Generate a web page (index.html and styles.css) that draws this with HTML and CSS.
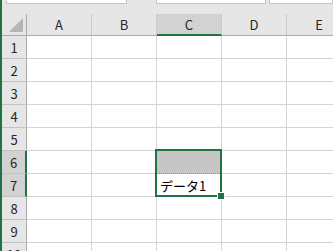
FILE: index.html
```html
<!DOCTYPE html>
<html lang="ja">
<head>
    <meta charset="UTF-8">
    <title>Sheet1</title>
    <link rel="stylesheet" href="styles.css">
</head>
<body>
    <div class="window">
        <div class="formula-strip">
            <div class="name-box"></div>
            <div class="formula-box"></div>
            <div class="formula-box extra"></div>
        </div>

        <div class="sheet">
            <div class="corner"><span class="tri"></span></div>
            <div class="col-head">A</div>
            <div class="col-head">B</div>
            <div class="col-head selected">C</div>
            <div class="col-head">D</div>
            <div class="col-head">E</div>

            <div class="row-head">1</div><div class="cell"></div><div class="cell"></div><div class="cell"></div><div class="cell"></div><div class="cell"></div>
            <div class="row-head">2</div><div class="cell"></div><div class="cell"></div><div class="cell"></div><div class="cell"></div><div class="cell"></div>
            <div class="row-head">3</div><div class="cell"></div><div class="cell"></div><div class="cell"></div><div class="cell"></div><div class="cell"></div>
            <div class="row-head">4</div><div class="cell"></div><div class="cell"></div><div class="cell"></div><div class="cell"></div><div class="cell"></div>
            <div class="row-head">5</div><div class="cell"></div><div class="cell"></div><div class="cell"></div><div class="cell"></div><div class="cell"></div>
            <div class="row-head selected">6</div><div class="cell"></div><div class="cell"></div>
            <div class="cell filled">
                <!-- 選択範囲 C6:C7 -->
                <div class="selection"><span class="fill-handle"></span></div>
            </div>
            <div class="cell"></div><div class="cell"></div>
            <div class="row-head selected">7</div><div class="cell"></div><div class="cell"></div><div class="cell data">データ1</div><div class="cell"></div><div class="cell"></div>
            <div class="row-head">8</div><div class="cell"></div><div class="cell"></div><div class="cell"></div><div class="cell"></div><div class="cell"></div>
            <div class="row-head">9</div><div class="cell"></div><div class="cell"></div><div class="cell"></div><div class="cell"></div><div class="cell"></div>
            <div class="row-head">10</div><div class="cell"></div><div class="cell"></div><div class="cell"></div><div class="cell"></div><div class="cell"></div>
        </div>
    </div>
</body>
</html>
```

FILE: styles.css
```css
body {
    margin: 0;
    background-color: #e6e6e6;
    font-family: 'Noto Sans CJK JP', 'Noto Sans', sans-serif;
    overflow: hidden;
}

.window {
    height: 251px;
    border-left: 2px solid #217346;
    background-color: #e6e6e6;
    overflow: hidden;
}

.formula-strip {
    display: flex;
    align-items: flex-start;
    height: 14px;
}

.name-box, .formula-box {
    height: 3px;
    background-color: #ffffff;
    border: 1px solid #c6c6c6;
    border-top: none;
}

.name-box {
    margin-left: 4px;
    width: 119px;
}

.formula-box {
    margin-left: 29px;
    width: 108px;
}

.formula-box.extra {
    margin-left: 3px;
    flex: 1;
}

.sheet {
    display: grid;
    grid-template-columns: 25px repeat(5, 65px);
    grid-template-rows: 22px repeat(10, 23px);
}

.corner, .col-head, .row-head, .cell {
    box-sizing: border-box;
}

.corner {
    display: flex;
    justify-content: flex-end;
    align-items: flex-end;
    padding: 0 3px 3px 0;
    border-right: 1px solid #ababab;
    border-bottom: 1px solid #ababab;
}

.tri {
    width: 0;
    height: 0;
    border-left: 14px solid transparent;
    border-bottom: 14px solid #b5b5b5;
}

.col-head {
    display: flex;
    justify-content: center;
    align-items: center;
    font-size: 13px;
    color: #262626;
    border-right: 1px solid #cacaca;
    border-bottom: 1px solid #ababab;
}

.col-head.selected {
    background-color: #d2d2d2;
    border-bottom: 2px solid #217346;
}

.row-head {
    display: flex;
    justify-content: center;
    align-items: center;
    font-size: 13px;
    color: #262626;
    border-right: 1px solid #ababab;
    border-bottom: 1px solid #c3c3c3;
}

.row-head.selected {
    background-color: #d2d2d2;
    border-right: 2px solid #217346;
}

.cell {
    background-color: #ffffff;
    border-right: 1px solid #d4d4d4;
    border-bottom: 1px solid #d4d4d4;
    font-size: 13px;
    line-height: 22px;
    padding-left: 3px;
    color: #000000;
    white-space: nowrap;
}

.cell.data {
    padding-top: 2px;
    line-height: 20px;
}

.cell.filled {
    position: relative;
    background-color: #c6c6c6;
    border-bottom: 1px dotted #8c8c8c;
}

.selection {
    position: absolute;
    left: -2px;
    top: -2px;
    width: 67px;
    height: 48px;
    box-sizing: border-box;
    border: 2px solid #217346;
    z-index: 2;
}

.fill-handle {
    position: absolute;
    right: -5px;
    bottom: -5px;
    width: 6px;
    height: 6px;
    background-color: #217346;
    border: 1px solid #ffffff;
}
```
